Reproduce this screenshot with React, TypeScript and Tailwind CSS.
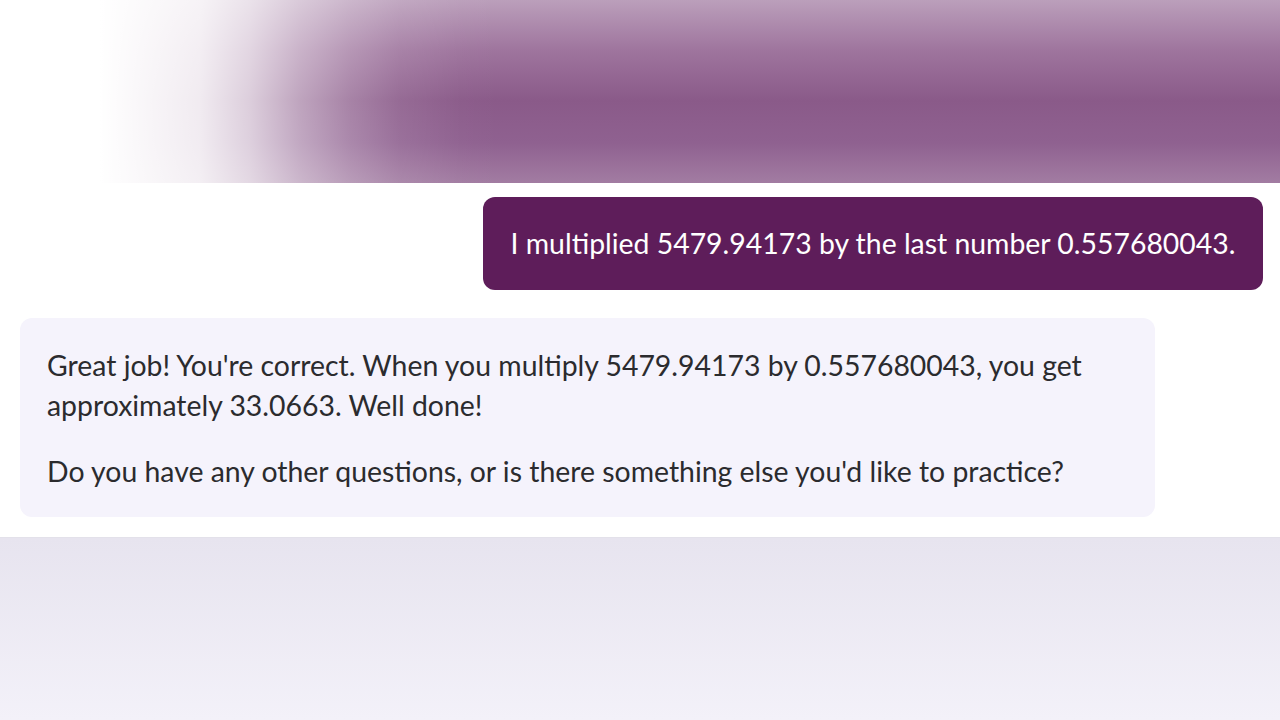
export default function App() {
  return (
    <div className="flex h-[720px] w-[1280px] flex-col overflow-hidden bg-white font-['Lato','Noto_Sans',sans-serif] antialiased">
      {/* blurred header banner */}
      <div className="h-[183px] shrink-0 bg-[linear-gradient(to_right,#ffffff_7.8%,rgba(255,255,255,0.88)_15.6%,rgba(255,255,255,0.7)_19.5%,rgba(255,255,255,0.45)_23.4%,rgba(255,255,255,0.25)_27.3%,rgba(255,255,255,0.1)_31.2%,rgba(255,255,255,0.02)_36%,rgba(255,255,255,0)_39%),linear-gradient(to_bottom,#bb9fbb_0%,#9e749d_28%,#8a5a89_55%,#8f6190_78%,#a27ca2_100%)]" />

      {/* conversation */}
      <div className="flex flex-col px-[17px] pt-[14px]">
        <div className="flex justify-end">
          <div className="w-[780px] rounded-[12px] bg-[#5e1d5a] py-[27px] text-center text-[28.4px] leading-[39px] text-white">
            I multiplied 5479.94173 by the last number 0.557680043.
          </div>
        </div>

        <div className="mt-[28px] ml-[3px] w-[1135px] rounded-[12px] bg-[#f5f3fc] px-[27px] pt-[27px] pb-[26px] text-[28.4px] leading-[40px] text-[#2b2b2e]">
          <p>
            Great job! You're correct. When you multiply 5479.94173 by 0.557680043, you get approximately 33.0663. Well done!
          </p>
          <p className="mt-[26px]">
            Do you have any other questions, or is there something else you'd like to practice?
          </p>
        </div>
      </div>

      {/* footer area */}
      <div className="mt-[20px] flex-1 border-t border-[#e3e1ea] bg-[linear-gradient(to_bottom,#e7e4ef,#f3f1f9)]" />
    </div>
  );
}
